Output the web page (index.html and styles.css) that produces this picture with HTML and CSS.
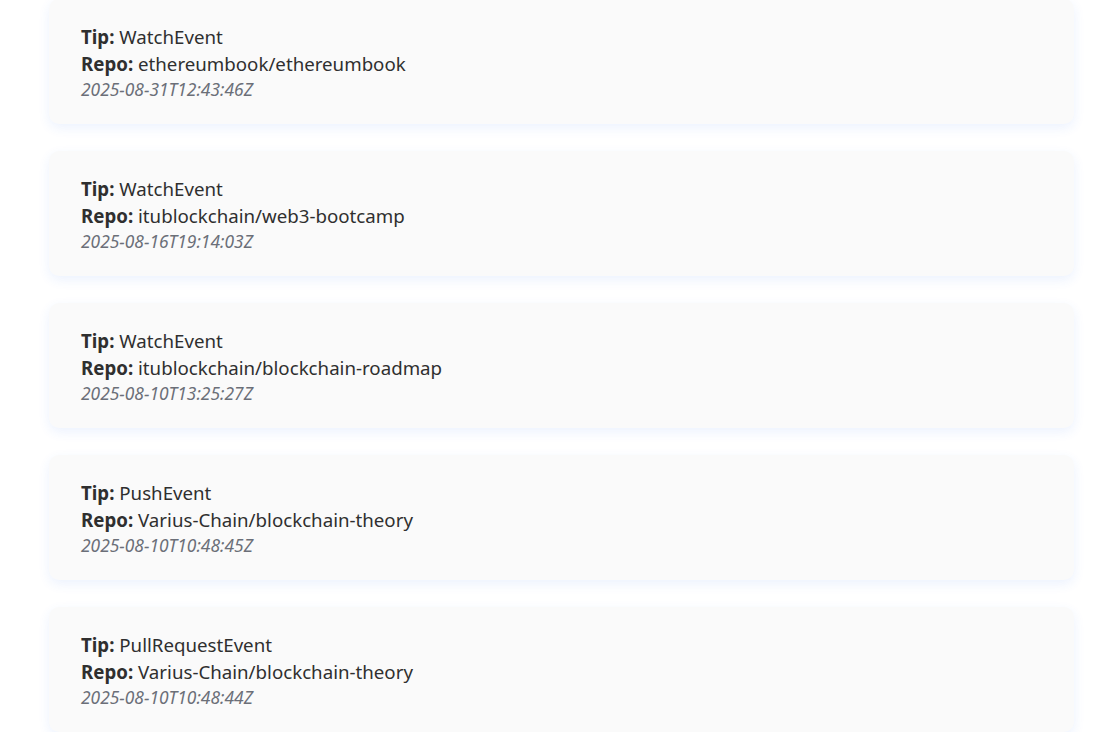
FILE: index.html
```html
<!DOCTYPE html>
<html lang="tr">
<head>
<meta charset="utf-8">
<title>Events</title>
<link rel="stylesheet" href="styles.css">
</head>
<body>
<div class="events">
  <div class="card">
    <div class="line"><strong>Tip:</strong> WatchEvent</div>
    <div class="line"><strong>Repo:</strong> ethereumbook/ethereumbook</div>
    <div class="time">2025-08-31T12:43:46Z</div>
  </div>
  <div class="card">
    <div class="line"><strong>Tip:</strong> WatchEvent</div>
    <div class="line"><strong>Repo:</strong> itublockchain/web3-bootcamp</div>
    <div class="time">2025-08-16T19:14:03Z</div>
  </div>
  <div class="card">
    <div class="line"><strong>Tip:</strong> WatchEvent</div>
    <div class="line"><strong>Repo:</strong> itublockchain/blockchain-roadmap</div>
    <div class="time">2025-08-10T13:25:27Z</div>
  </div>
  <div class="card">
    <div class="line"><strong>Tip:</strong> PushEvent</div>
    <div class="line"><strong>Repo:</strong> Varius-Chain/blockchain-theory</div>
    <div class="time">2025-08-10T10:48:45Z</div>
  </div>
  <div class="card">
    <div class="line"><strong>Tip:</strong> PullRequestEvent</div>
    <div class="line"><strong>Repo:</strong> Varius-Chain/blockchain-theory</div>
    <div class="time">2025-08-10T10:48:44Z</div>
  </div>
</div>
</body>
</html>
```

FILE: styles.css
```css
html, body {
  margin: 0;
  padding: 0;
  background: #ffffff;
}
body {
  font-family: "Noto Sans", "Open Sans", "Liberation Sans", sans-serif;
  color: #2f2f2f;
}
.events {
  display: flex;
  flex-direction: column;
  gap: 27px;
  margin: -1px 25px 0 49px;
}
.card {
  background: #fafafa;
  border-radius: 10px;
  box-shadow: 0 4px 12px rgba(40, 110, 240, 0.09);
  padding: 24px 32px 22px;
  height: 125px;
  box-sizing: border-box;
}
.line {
  font-size: 18.7px;
  line-height: 27px;
}
.line strong {
  font-weight: 700;
}
.time {
  font-size: 17.4px;
  line-height: 24px;
  font-style: italic;
  color: #6b6f78;
}
```
